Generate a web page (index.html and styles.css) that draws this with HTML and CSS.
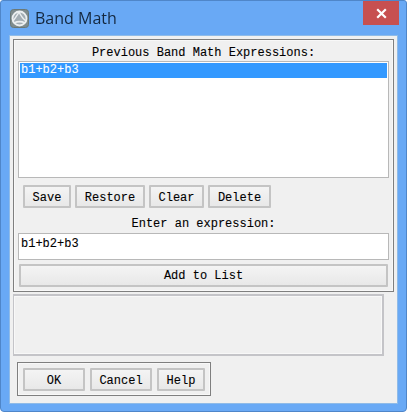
FILE: index.html
```html
<!DOCTYPE html>
<html lang="en">
<head>
    <meta charset="UTF-8">
    <meta name="viewport" content="width=device-width, initial-scale=1.0">
    <title>Band Math</title>
    <link rel="stylesheet" href="styles.css">
</head>
<body>
    <div class="window">
        <div class="titlebar">
            <svg class="app-icon" width="19" height="19" viewBox="0 0 19 19">
                <rect x="0.5" y="0.5" width="18" height="18" rx="3" fill="#7f8c8e" stroke="#6b7876"/>
                <circle cx="9.5" cy="9.5" r="7" fill="#a3adb3" stroke="#eceff0" stroke-width="1.8"/>
                <path d="M3 12 C6 8 8 5 9 3 M9 3 C11 7 13 10 16 12 M4 14 C8 12 11 12 15 14" fill="none" stroke="#eceff0" stroke-width="1.5"/>
            </svg>
            <span class="title">Band Math</span>
            <div class="close-btn">
                <svg width="11" height="11" viewBox="0 0 11 11">
                    <path d="M1.2 1.2 L9.8 9.8 M9.8 1.2 L1.2 9.8" stroke="#fff" stroke-width="2.2"/>
                </svg>
            </div>
        </div>

        <div class="client">
            <div class="main-frame">
                <div class="label label-top">Previous Band Math Expressions:</div>
                <div class="listbox">
                    <div class="list-item selected">b1+b2+b3</div>
                </div>

                <div class="button-row">
                    <button class="btn btn-save">Save</button>
                    <button class="btn btn-restore">Restore</button>
                    <button class="btn btn-clear">Clear</button>
                    <button class="btn btn-delete">Delete</button>
                </div>

                <div class="label label-enter">Enter an expression:</div>
                <div class="text-input">b1+b2+b3</div>
                <button class="btn btn-add">Add to List</button>
            </div>

            <div class="status-frame"></div>

            <div class="action-frame">
                <button class="btn btn-ok">OK</button>
                <button class="btn btn-cancel">Cancel</button>
                <button class="btn btn-help">Help</button>
            </div>
        </div>
    </div>
</body>
</html>
```

FILE: styles.css
```css
html, body {
    margin: 0;
    padding: 0;
    background-color: #fff;
}

body {
    font-family: "Liberation Mono", monospace;
    font-size: 12px;
    color: #000;
    -webkit-text-stroke: 0.1px;
}

.window {
    box-sizing: border-box;
    width: 407px;
    height: 412px;
    display: flex;
    flex-direction: column;
    padding: 0 8px 7px 8px;
    background-color: #69a9f5;
    border: 1px solid #4f86c9;
    border-radius: 3px 3px 4px 4px;
    filter: blur(0.35px);
}

.titlebar {
    height: 34px;
    display: flex;
    align-items: flex-start;
    flex-shrink: 0;
}

.app-icon {
    margin: 8px 0 0 1px;
}

.title {
    margin: 6px 0 0 6px;
    font-family: "Open Sans", sans-serif;
    font-size: 16px;
    line-height: 22px;
    color: #14283f;
    -webkit-text-stroke: 0;
}

.close-btn {
    width: 36px;
    height: 24px;
    margin-left: auto;
    margin-right: -1px;
    display: flex;
    align-items: center;
    justify-content: center;
    background-color: #c75050;
}

.client {
    flex: 1;
    display: flex;
    flex-direction: column;
    padding: 3px 0 0 3px;
    background-color: #f0f0f0;
    border: 1px solid #8fbbe8;
}

.main-frame {
    box-sizing: border-box;
    width: 381px;
    height: 253px;
    padding: 3px 4px 0 4px;
    border: 1px solid #7f7f7f;
    box-shadow: inset 0 0 0 1px #f8f8f8;
}

.label {
    height: 18px;
    line-height: 18px;
    text-align: center;
}

.label-top {
    line-height: 20px;
}

.listbox {
    box-sizing: border-box;
    height: 117px;
    padding: 1px;
    background-color: #fff;
    border: 1px solid #b8b8b8;
}

.list-item {
    height: 15px;
    line-height: 14px;
    padding-left: 1px;
}

.selected {
    background-color: #3399ff;
    color: #fff;
}

.button-row {
    display: flex;
    gap: 4px;
    margin: 7px 0 0 5px;
}

.btn {
    box-sizing: border-box;
    height: 23px;
    padding: 2px 0 0 0;
    font-family: "Liberation Mono", monospace;
    font-size: 12px;
    color: #000;
    background: linear-gradient(#f4f4f4, #e8e8e8);
    border: 2px solid #c4c4c4;
    border-radius: 1px;
}

.btn-save { width: 48px; }
.btn-restore { width: 70px; }
.btn-clear { width: 55px; }
.btn-delete { width: 63px; }

.label-enter {
    margin-top: 7px;
}

.text-input {
    box-sizing: border-box;
    height: 27px;
    line-height: 21px;
    padding-left: 2px;
    background-color: #fff;
    border: 1px solid #b8b8b8;
}

.btn-add {
    display: block;
    width: 369px;
    margin: 4px 0 0 1px;
    padding-top: 0;
}

.status-frame {
    box-sizing: border-box;
    width: 371px;
    height: 62px;
    margin-top: 2px;
    border: 2px solid #c4c4c8;
    border-left-width: 1px;
    box-shadow: inset 0 0 0 1px #f8f8f8;
}

.action-frame {
    box-sizing: border-box;
    width: 194px;
    height: 34px;
    margin: 6px 0 0 4px;
    padding: 5px;
    display: flex;
    gap: 5px;
    border: 1px solid #7f7f7f;
    box-shadow: inset 0 0 0 1px #f8f8f8;
}

.btn-ok { width: 62px; }
.btn-cancel { width: 62px; }
.btn-help { width: 48px; }
```
